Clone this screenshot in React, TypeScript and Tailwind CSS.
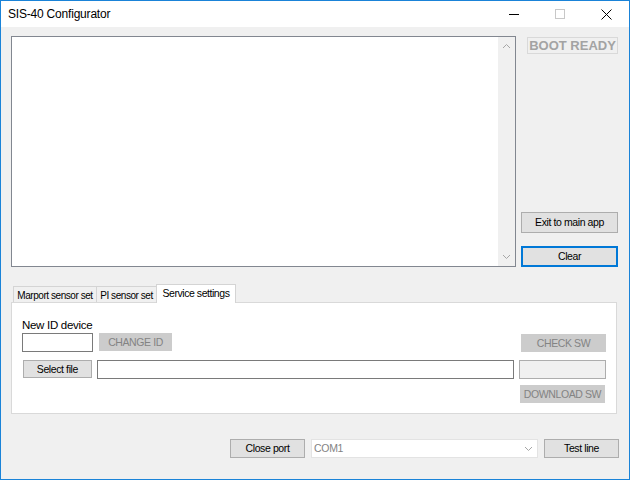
import React from 'react';

// ============================================================================
// SIS-40 Configurator window (WinForms look)
// ============================================================================

const font = { fontFamily: '"Liberation Sans", Arial, sans-serif' };

function WinButton({
  label,
  className = '',
  disabled = false,
  focused = false,
}: {
  label: string;
  className?: string;
  disabled?: boolean;
  focused?: boolean;
}) {
  if (disabled) {
    return (
      <div
        className={`flex items-center justify-center whitespace-nowrap bg-[#cccccc] text-[#838383] text-[10.5px] tracking-[-0.4px] leading-none ${className}`}
      >
        {label}
      </div>
    );
  }
  return (
    <div
      className={`flex items-center justify-center whitespace-nowrap bg-[#e1e1e1] text-[10.5px] tracking-[-0.4px] leading-none text-black ${
        focused ? 'border-2 border-[#0078d7]' : 'border border-[#adadad]'
      } ${className}`}
    >
      {label}
    </div>
  );
}

function Chevron({ up }: { up?: boolean }) {
  return (
    <svg width="9" height="6" viewBox="0 0 9 6" className="block">
      <path
        d={up ? 'M1 5 L4.5 1.5 L8 5' : 'M1 1 L4.5 4.5 L8 1'}
        fill="none"
        stroke="#a6a6a6"
        strokeWidth="1"
      />
    </svg>
  );
}

export default function App() {
  return (
    <div
      style={font}
      className="w-[630px] h-[480px] border border-[#1a83d8] bg-[#f0f0f0] flex flex-col overflow-hidden"
    >
      {/* Title bar */}
      <div className="h-[26px] bg-white flex items-center shrink-0">
        <span className="pl-[7px] text-[12px] tracking-[-0.2px] text-black">SIS-40 Configurator</span>
        <div className="ml-auto flex items-center h-full">
          <div className="w-[46px] h-full flex items-center justify-center">
            <div className="w-[10px] h-px bg-black" />
          </div>
          <div className="w-[46px] h-full flex items-center justify-center">
            <div className="w-[10px] h-[10px] border border-[#c8c8c8]" />
          </div>
          <div className="w-[46px] h-full flex items-center justify-center">
            <svg width="11" height="11" viewBox="0 0 11 11">
              <path d="M0.5 0.5 L10.5 10.5 M10.5 0.5 L0.5 10.5" stroke="#000" strokeWidth="1" />
            </svg>
          </div>
        </div>
      </div>

      {/* Content */}
      <div className="pl-[10px] pt-[9px] flex flex-col">
        {/* Log + right column */}
        <div className="flex">
          <div className="w-[505px] h-[231px] border border-[#828790] bg-white flex">
            <div className="flex-1" />
            <div className="w-[17px] bg-[#f0f0f0] flex flex-col items-center justify-between py-[6px]">
              <Chevron up />
              <Chevron />
            </div>
          </div>
          <div className="ml-[5px] w-[97px] flex flex-col">
            <div className="ml-[6px] mt-[1px] w-[91px] h-[17px] border border-[#d9d9d9] flex items-center justify-center text-[13px] font-bold text-[#a3a3a3] leading-none">
              BOOT READY
            </div>
            <WinButton label="Exit to main app" className="mt-auto w-[97px] h-[21px]" />
            <WinButton label="Clear" focused className="mt-[13px] w-[97px] h-[21px]" />
          </div>
        </div>

        {/* Tabs */}
        <div className="mt-[17px] w-[606px] flex flex-col">
          <div className="flex items-end h-[18px] pl-[2px] relative z-10 text-[10px] tracking-[-0.45px] whitespace-nowrap">
            <div className="w-[84px] h-[16px] pt-px border border-[#d4d4d4] border-b-0 bg-[#f0f0f0] flex items-center justify-center">
              Marport sensor set
            </div>
            <div className="w-[60px] h-[16px] pt-px border border-[#d4d4d4] border-b-0 border-l-0 bg-[#f0f0f0] flex items-center justify-center">
              PI sensor set
            </div>
            <div className="w-[80px] h-[19px] -mb-px -ml-[1px] border border-[#d4d4d4] border-b-0 bg-white flex items-center justify-center text-[10.5px]">
              Service settings
            </div>
          </div>
          <div className="h-[112px] border border-[#d9d9d9] bg-white pl-[10px] pr-[10px] pt-[15px] flex flex-col">
            <div className="text-[11.5px] tracking-[-0.3px] leading-[14px] h-[15px]">New ID device</div>
            <div className="flex items-start">
              <div className="w-[71px] h-[19px] border border-[#7a7a7a] bg-white" />
              <WinButton label="CHANGE ID" disabled className="ml-[6px] w-[73px] h-[18px]" />
              <WinButton label="CHECK SW" disabled className="ml-auto mt-[1px] w-[85px] h-[18px]" />
            </div>
            <div className="flex items-start mt-[8px]">
              <WinButton label="Select file" className="ml-[1px] w-[69px] h-[18px]" />
              <div className="ml-[5px] w-[419px] h-[19px] border border-[#7a7a7a] bg-white" />
              <div className="ml-[5px] w-[87px] h-[19px] border border-[#adadad] bg-[#f0f0f0]" />
            </div>
            <div className="flex justify-end mt-[6px] pr-px">
              <WinButton label="DOWNLOAD SW" disabled className="w-[85px] h-[18px]" />
            </div>
          </div>
        </div>

        {/* Bottom row */}
        <div className="mt-[25px] flex items-center pl-[219px]">
          <WinButton label="Close port" className="w-[75px] h-[19px]" />
          <div className="ml-[6px] w-[227px] h-[19px] border border-[#e3e3e3] bg-white flex items-center">
            <span className="pl-[2px] text-[10.5px] tracking-[-0.3px] text-[#838383] flex-1">COM1</span>
            <div className="w-[17px] flex items-center justify-center">
              <Chevron />
            </div>
          </div>
          <WinButton label="Test line" className="ml-[6px] w-[75px] h-[19px]" />
        </div>
      </div>
    </div>
  );
}
